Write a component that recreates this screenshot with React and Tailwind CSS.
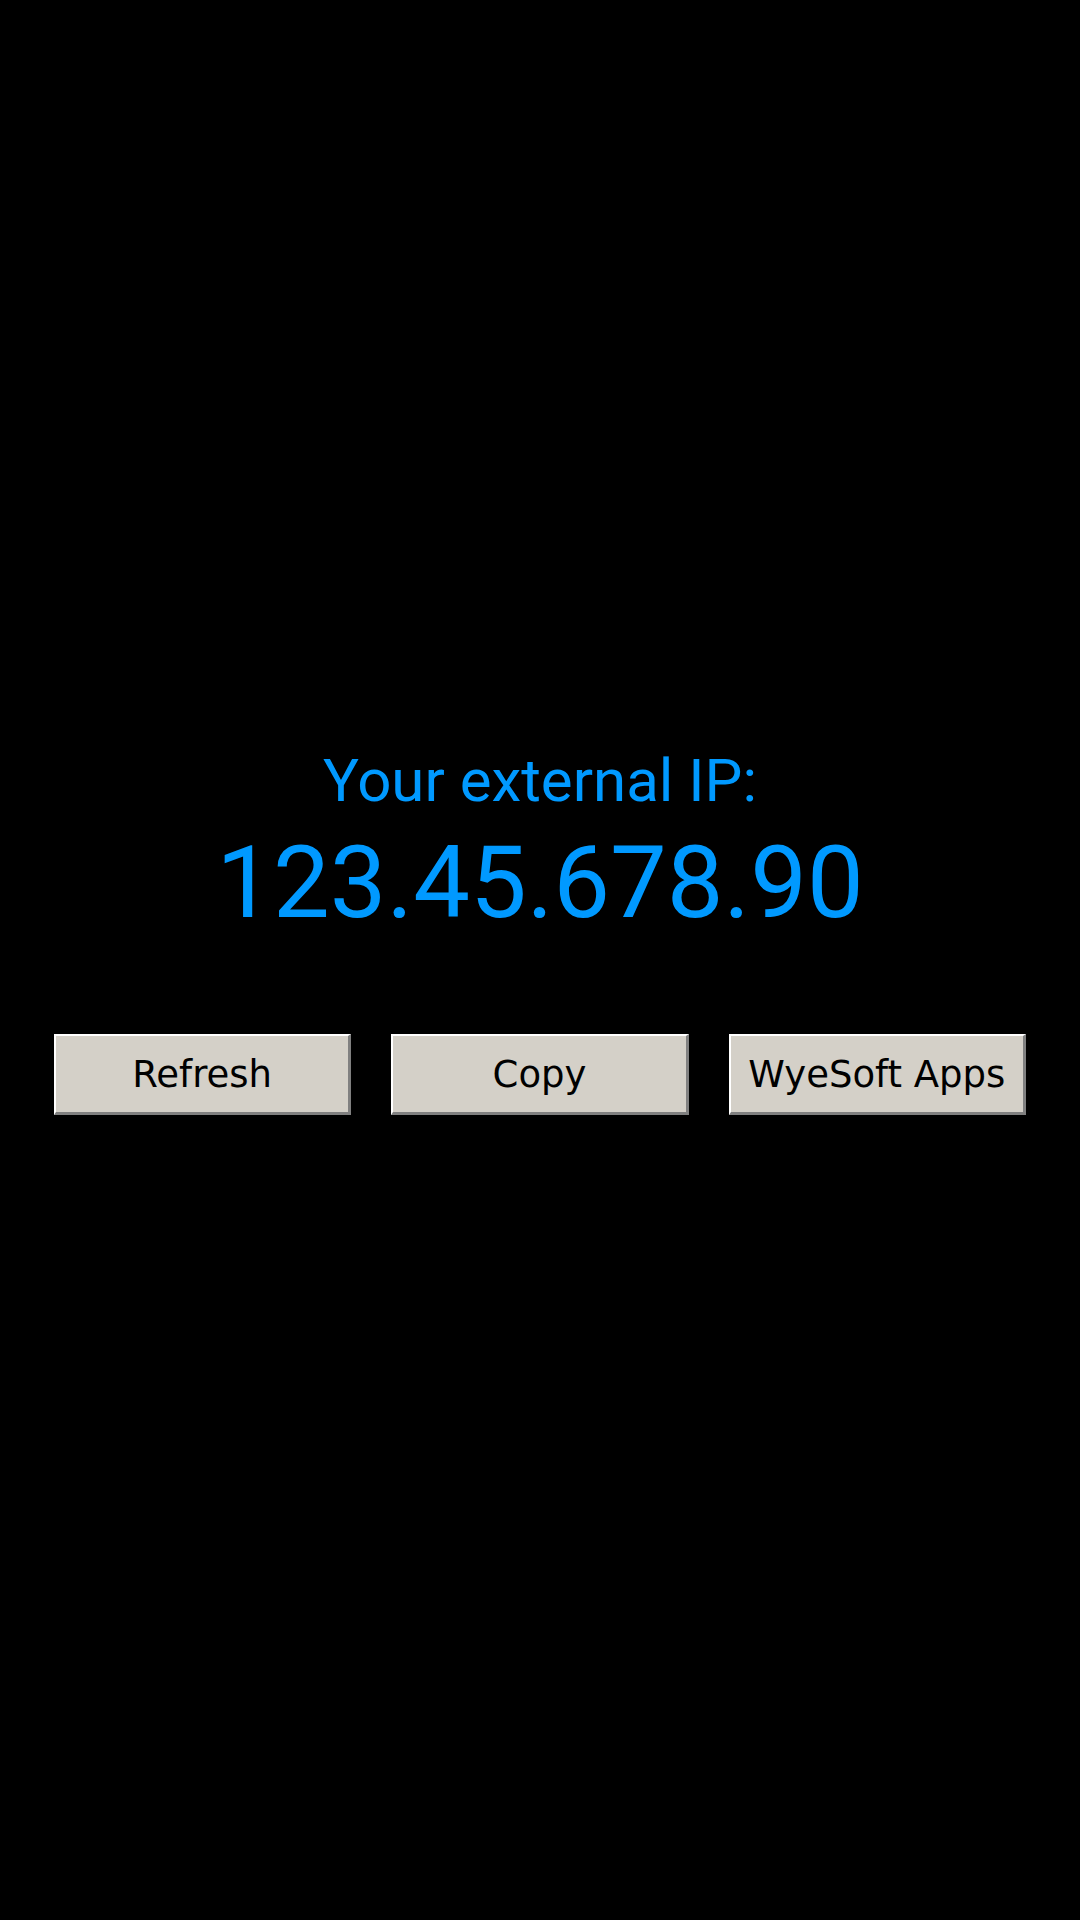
const buttons = ['Refresh', 'Copy', 'WyeSoft Apps'];

export default function App() {
  return (
    <div className="w-[1080px] h-[1920px] bg-black flex flex-col items-center overflow-hidden" style={{ fontFamily: 'Roboto, sans-serif' }}>
      <div className="mt-[746px] text-[60px] leading-[70px] text-[#0099ff]">Your external IP:</div>
      <div className="mt-[8px] text-[101px] leading-[118px] text-[#0099ff]">123.45.678.90</div>

      {/* action buttons */}
      <div className="mt-[92px] w-full px-[54px] grid grid-cols-3 gap-[40px]">
        {buttons.map((label) => (
          <button
            key={label}
            type="button"
            className="h-[81px] bg-[#d4d0c8] border-t-2 border-l-2 border-b-[3px] border-r-[3px] border-t-white border-l-white border-b-[#808080] border-r-[#808080] text-black text-[37px] leading-none flex items-center justify-center"
            style={{ fontFamily: '"DejaVu Sans", sans-serif' }}
          >
            {label}
          </button>
        ))}
      </div>
    </div>
  );
}
